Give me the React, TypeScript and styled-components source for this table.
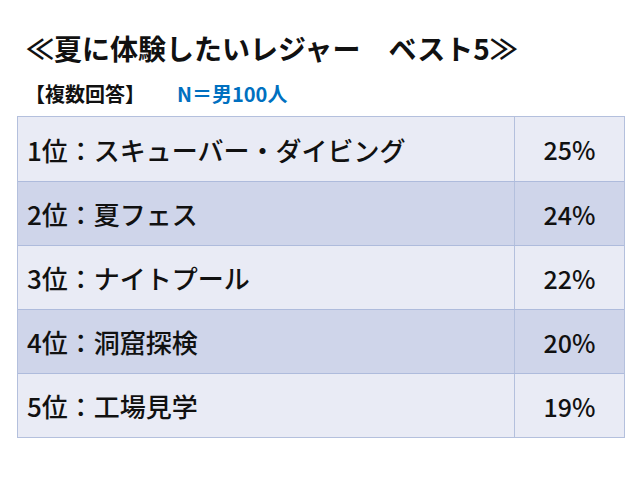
import React from "react";
import styled, { createGlobalStyle } from "styled-components";

const GlobalStyle = createGlobalStyle`
  html, body {
    margin: 0;
    padding: 0;
    background: #ffffff;
  }
  body {
    font-family: "Noto Sans CJK JP", "Noto Sans", sans-serif;
    color: #111111;
  }
`;

const Page = styled.div`
  width: 640px;
  height: 480px;
  box-sizing: border-box;
  padding: 30px 17px 0 17px;
  display: flex;
  flex-direction: column;
`;

const Title = styled.h1`
  margin: 0 0 0 9px;
  font-size: 28px;
  font-weight: 700;
  line-height: 36px;
  white-space: pre;
`;

const SubRow = styled.div`
  display: flex;
  align-items: center;
  margin: 14px 0 0 8px;
  height: 26px;
  font-size: 20px;
  font-weight: 700;
`;

const Note = styled.span`
  color: #0070c0;
  margin-left: 32px;
`;

const Table = styled.div`
  margin-top: 10px;
  width: 606px;
  border: 1px solid #b4c0dd;
  display: flex;
  flex-direction: column;
`;

const Row = styled.div<{ $dark: boolean }>`
  display: grid;
  grid-template-columns: 497px 1fr;
  height: 64px;
  box-sizing: border-box;
  background: ${(p) => (p.$dark ? "#cfd5ea" : "#e9ebf5")};
  & + & {
    border-top: 1px solid #aebbdc;
  }
`;

const Label = styled.div`
  display: flex;
  align-items: center;
  padding-left: 9px;
  font-size: 26px;
  font-weight: 500;
  border-right: 1px solid #b4c0dd;
`;

const Value = styled.div`
  display: flex;
  align-items: center;
  justify-content: center;
  font-size: 25px;
  font-weight: 500;
`;

const rows = [
  ["1位：スキューバー・ダイビング", "25%"],
  ["2位：夏フェス", "24%"],
  ["3位：ナイトプール", "22%"],
  ["4位：洞窟探検", "20%"],
  ["5位：工場見学", "19%"],
];

export default function App() {
  return (
    <>
      <GlobalStyle />
      <Page>
        <Title>≪夏に体験したいレジャー　ベスト5≫</Title>
        <SubRow>
          【複数回答】<Note>N＝男100人</Note>
        </SubRow>
        <Table>
          {rows.map(([label, value], i) => (
            <Row key={label} $dark={i % 2 === 1}>
              <Label>{label}</Label>
              <Value>{value}</Value>
            </Row>
          ))}
        </Table>
      </Page>
    </>
  );
}
